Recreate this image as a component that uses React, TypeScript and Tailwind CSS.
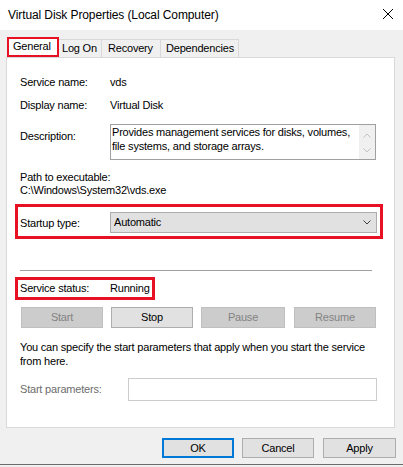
import React from "react";

const font = { fontFamily: '"Liberation Sans", Arial, sans-serif' };

function Chevron({ up, color }: { up?: boolean; color: string }) {
  return (
    <svg width="8" height="5" viewBox="0 0 8 5" className="block">
      <path
        d={up ? "M0.5 4.5 L4 1 L7.5 4.5" : "M0.5 0.5 L4 4 L7.5 0.5"}
        fill="none"
        stroke={color}
        strokeWidth="1"
      />
    </svg>
  );
}

function ActionButton({
  label,
  width,
  disabled,
}: {
  label: string;
  width: string;
  disabled?: boolean;
}) {
  return (
    <div
      className={
        disabled
          ? `${width} h-[21px] flex items-center justify-center border border-[#bfbfbf] bg-[#cccccc] text-[#838383]`
          : `${width} h-[21px] flex items-center justify-center border border-[#adadad] bg-[#e1e1e1] text-black`
      }
    >
      {label}
    </div>
  );
}

export default function App() {
  return (
    <div
      className="w-[403px] h-[467px] bg-[#f0f0f0] flex flex-col overflow-hidden text-[11px] tracking-[-0.2px] text-black"
      style={font}
    >
      {/* Title bar */}
      <div className="h-[30px] bg-white flex justify-between pl-[8px] pr-[10px]">
        <div className="self-center text-[12px] tracking-[-0.1px] leading-[14px]">
          Virtual Disk Properties (Local Computer)
        </div>
        <svg width="10" height="10" viewBox="0 0 10 10" className="mt-[9px]">
          <path d="M0 0 L10 10 M10 0 L0 10" stroke="#000" strokeWidth="1" />
        </svg>
      </div>

      {/* Tabs */}
      <div className="h-[27px] flex items-end pl-[7px] leading-[13px]">
        <div className="h-[20px] w-[52px] border-2 border-[#e81123] bg-white flex items-center pl-[4px] pb-[1px]">
          General
        </div>
        <div className="h-[18px] w-[43px] border-t border-r border-[#d9d9d9] flex items-center pl-[3px]">
          Log On
        </div>
        <div className="h-[18px] w-[59px] border-t border-r border-[#d9d9d9] flex items-center pl-[6px]">
          Recovery
        </div>
        <div className="h-[18px] w-[78px] border-t border-r border-[#d9d9d9] flex items-center pl-[5px]">
          Dependencies
        </div>
      </div>

      {/* General page */}
      <div className="ml-[6px] w-[389px] h-[371px] bg-white border border-[#d9d9d9] pl-[13px] pt-[16px] flex flex-col">
        <div className="flex leading-[16px]">
          <div className="w-[90px]">Service name:</div>
          <div>vds</div>
        </div>
        <div className="flex leading-[16px] mt-[7px]">
          <div className="w-[90px]">Display name:</div>
          <div>Virtual Disk</div>
        </div>
        <div className="flex mt-[11px]">
          <div className="w-[90px] pt-[4px] leading-[16px]">Description:</div>
          <div className="w-[266px] h-[36px] border border-[#a0a0a0] flex">
            <div className="flex-1 pl-[1px] leading-[14px]">
              Provides management services for disks, volumes,
              <br />
              file systems, and storage arrays.
            </div>
            <div className="w-[16px] bg-[#f0f0f0] flex flex-col items-center pt-[8px] gap-[10px]">
              <Chevron up color="#c2c2c2" />
              <Chevron color="#c2c2c2" />
            </div>
          </div>
        </div>
        <div className="mt-[11px] leading-[13px]">
          <div>Path to executable:</div>
          <div>C:\Windows\System32\vds.exe</div>
        </div>

        {/* Startup type */}
        <div className="mt-[7px] -ml-[5px] w-[368px] border-[3px] border-[#e81123] pl-[2px] pr-[3px] pt-[5px] pb-[3px] flex items-center">
          <div className="w-[90px] leading-[16px]">Startup type:</div>
          <div className="flex-1 h-[21px] border border-[#adadad] bg-[#e1e1e1] flex items-center justify-between pl-[3px] pr-[5px]">
            <span>Automatic</span>
            <Chevron color="#404040" />
          </div>
        </div>

        <div className="mt-[31px] w-[352px] h-px bg-[#a0a0a0]" />

        {/* Service status */}
        <div className="mt-[6px] -ml-[5px] w-[140px] h-[23px] border-[3px] border-[#e81123] pl-[2px] flex items-center">
          <div className="w-[90px]">Service status:</div>
          <div>Running</div>
        </div>

        <div className="mt-[7px] ml-[1px] flex">
          <ActionButton label="Start" width="w-[82px]" disabled />
          <div className="w-[8px]" />
          <ActionButton label="Stop" width="w-[82px]" />
          <div className="w-[8px]" />
          <ActionButton label="Pause" width="w-[84px]" disabled />
          <div className="w-[9px]" />
          <ActionButton label="Resume" width="w-[82px]" disabled />
        </div>

        <div className="mt-[12px] leading-[14px]">
          You can specify the start parameters that apply when you start the service
          <br />
          from here.
        </div>

        <div className="mt-[10px] flex items-center">
          <div className="w-[108px] text-[#6d6d6d]">Start parameters:</div>
          <div className="w-[249px] h-[23px] border border-[#cccccc] bg-white" />
        </div>
      </div>

      {/* Dialog buttons */}
      <div className="mt-[10px] flex justify-end pr-[7px]">
        <div className="w-[72px] h-[20px] border-2 border-[#0078d7] bg-[#e1e1e1] flex items-center justify-center">
          OK
        </div>
        <div className="w-[8px]" />
        <div className="w-[72px] h-[20px] border border-[#adadad] bg-[#e1e1e1] flex items-center justify-center">
          Cancel
        </div>
        <div className="w-[9px]" />
        <div className="w-[73px] h-[20px] border border-[#adadad] bg-[#e1e1e1] flex items-center justify-center">
          Apply
        </div>
      </div>

      <div className="mt-auto mb-[2px] h-px bg-[#6b6b6b]" />
    </div>
  );
}
